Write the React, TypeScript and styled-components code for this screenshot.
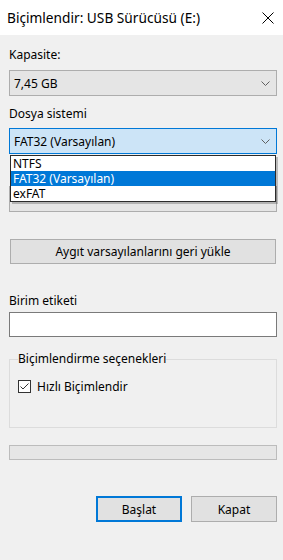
import React from "react";
import styled, { createGlobalStyle } from "styled-components";

const GlobalStyle = createGlobalStyle`
  html, body {
    margin: 0;
    padding: 0;
    background: #f0f0f0;
  }
  body {
    font-family: "Noto Sans", "Open Sans", sans-serif;
    font-size: 12px;
    color: #000;
  }
  * {
    box-sizing: border-box;
  }
`;

const Window = styled.div`
  width: 283px;
  height: 560px;
  display: flex;
  flex-direction: column;
  background: #f0f0f0;
  overflow: hidden;
`;

const TitleBar = styled.div`
  height: 35px;
  flex: none;
  display: flex;
  align-items: center;
  justify-content: space-between;
  background: #fff;
  padding: 0 9px 0 7px;
`;

const Title = styled.span`
  font-size: 13.7px;
  line-height: 20px;
  color: #000;
`;

const Content = styled.div`
  display: flex;
  flex-direction: column;
  padding: 0 6px 0 9px;
`;

const Label = styled.div<{ $top: number; $hidden?: boolean }>`
  margin-top: ${(p) => p.$top}px;
  line-height: 16px;
  visibility: ${(p) => (p.$hidden ? "hidden" : "visible")};
`;

const ComboWrap = styled.div<{ $top: number }>`
  position: relative;
  margin-top: ${(p) => p.$top}px;
`;

const Combo = styled.div<{ $focused?: boolean }>`
  height: 26px;
  display: flex;
  align-items: center;
  justify-content: space-between;
  padding: 0 6px 0 4px;
  border: 1px solid ${(p) => (p.$focused ? "#0078d7" : "#adadad")};
  background: ${(p) => (p.$focused ? "#cce4f7" : "#e5e5e5")};
`;

const DropList = styled.div`
  position: absolute;
  z-index: 2;
  top: calc(100% + 1px);
  left: 1px;
  right: 1px;
  background: #fff;
  border: 1px solid #2b2b2b;
  box-shadow: 2px 2px 0 rgba(0, 0, 0, 0.22);
`;

const DropItem = styled.div<{ $selected?: boolean }>`
  height: 15px;
  line-height: 15px;
  padding-left: 2px;
  background: ${(p) => (p.$selected ? "#0078d7" : "#fff")};
  color: ${(p) => (p.$selected ? "#fff" : "#000")};
`;

const PushButton = styled.button<{ $default?: boolean; $width?: number }>`
  height: 26px;
  width: ${(p) => (p.$width ? `${p.$width}px` : "auto")};
  margin: 0;
  padding: 0;
  font-family: inherit;
  font-size: 12px;
  color: #000;
  background: #e1e1e1;
  border: ${(p) => (p.$default ? "2px solid #0078d7" : "1px solid #adadad")};
`;

const RestoreButton = styled(PushButton)`
  margin-top: 27px;
  margin-left: 1px;
  margin-right: 1px;
  height: 25px;
`;

const TextBox = styled.div`
  margin-top: 3px;
  height: 25px;
  background: #fff;
  border: 1px solid #7a7a7a;
`;

const Group = styled.fieldset`
  margin: 14px 0 0;
  padding: 0 8px 33px;
  border: 1px solid #dcdcdc;
  min-width: 0;
`;

const Legend = styled.legend`
  padding: 0;
  line-height: 16px;
`;

const CheckRow = styled.label`
  margin-top: 12px;
  height: 15px;
  display: flex;
  align-items: center;
  gap: 6px;
`;

const CheckBox = styled.span`
  width: 13px;
  height: 13px;
  flex: none;
  display: flex;
  align-items: center;
  justify-content: center;
  background: #fff;
  border: 1px solid #333;
`;

const Progress = styled.div`
  margin-top: 17px;
  height: 15px;
  background: #e6e6e6;
  border: 1px solid #bcbcbc;
`;

const ButtonRow = styled.div`
  margin-top: 36px;
  display: flex;
  justify-content: flex-end;
  gap: 9px;
`;

const Chevron = () => (
  <svg width="9" height="5" viewBox="0 0 9 5">
    <path d="M0.5 0.5 L4.5 4.5 L8.5 0.5" fill="none" stroke="#606060" strokeWidth="1" />
  </svg>
);

const CloseIcon = () => (
  <svg width="12" height="12" viewBox="0 0 12 12">
    <path d="M0.5 0.5 L11.5 11.5 M11.5 0.5 L0.5 11.5" stroke="#000" strokeWidth="1" />
  </svg>
);

const Check = () => (
  <svg width="11" height="11" viewBox="0 0 11 11">
    <path d="M1.5 5.5 L4 8 L9.5 2.5" fill="none" stroke="#333" strokeWidth="1" />
  </svg>
);

export default function App() {
  const fsOptions = ["NTFS", "FAT32 (Varsayılan)", "exFAT"];

  return (
    <Window>
      <GlobalStyle />
      <TitleBar>
        <Title>Biçimlendir: USB Sürücüsü (E:)</Title>
        <CloseIcon />
      </TitleBar>
      <Content>
        <Label $top={12}>Kapasite:</Label>
        <ComboWrap $top={7}>
          <Combo>
            <span>7,45 GB</span>
            <Chevron />
          </Combo>
        </ComboWrap>

        <Label $top={10}>Dosya sistemi</Label>
        <ComboWrap $top={6}>
          <Combo $focused>
            <span>FAT32 (Varsayılan)</span>
            <Chevron />
          </Combo>
          <DropList>
            {fsOptions.map((o) => (
              <DropItem key={o} $selected={o.startsWith("FAT32")}>
                {o}
              </DropItem>
            ))}
          </DropList>
        </ComboWrap>

        {/* cluster size field, covered by the open list */}
        <Label $top={10} $hidden>
          Ayırma birimi boyutu
        </Label>
        <ComboWrap $top={6}>
          <Combo />
        </ComboWrap>

        <RestoreButton>Aygıt varsayılanlarını geri yükle</RestoreButton>

        <Label $top={29}>Birim etiketi</Label>
        <TextBox />

        <Group>
          <Legend>Biçimlendirme seçenekleri</Legend>
          <CheckRow>
            <CheckBox>
              <Check />
            </CheckBox>
            <span>Hızlı Biçimlendir</span>
          </CheckRow>
        </Group>

        <Progress />

        <ButtonRow>
          <PushButton $default $width={86}>Başlat</PushButton>
          <PushButton $width={86}>Kapat</PushButton>
        </ButtonRow>
      </Content>
    </Window>
  );
}
